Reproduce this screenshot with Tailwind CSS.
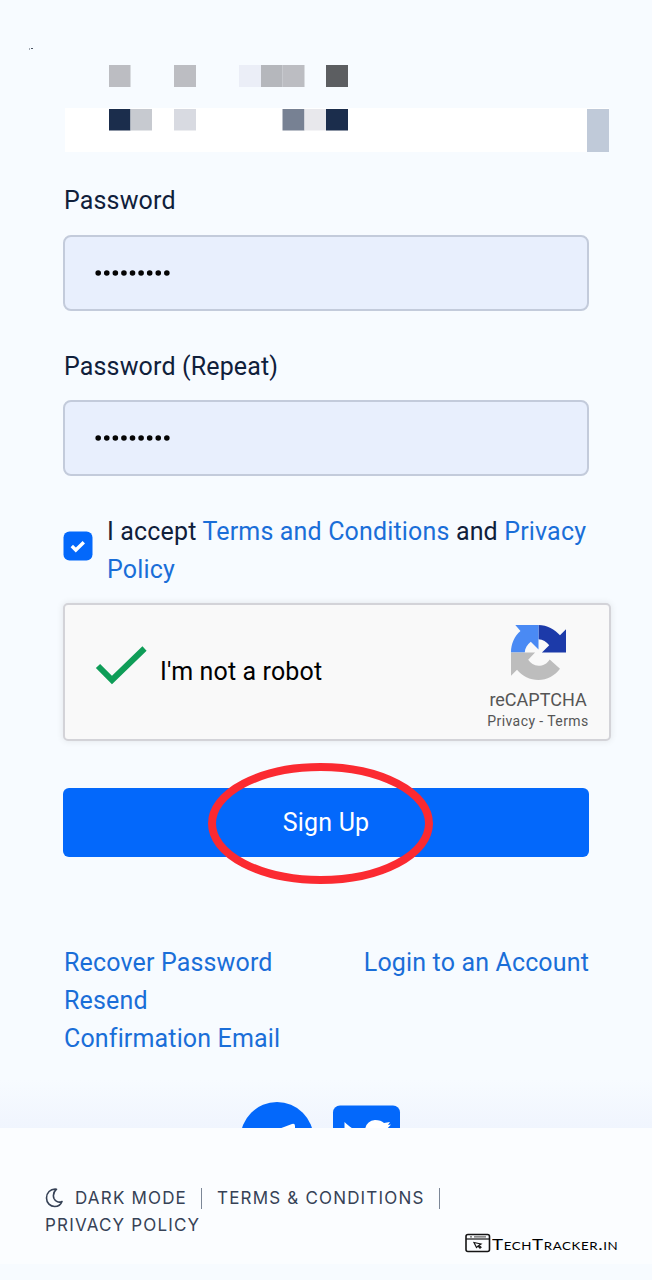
<!DOCTYPE html>
<html lang="en">
<head>
<meta charset="utf-8">
<title>Sign Up</title>
<script src="https://cdn.jsdelivr.net/npm/@tailwindcss/browser@4"></script>
</head>
<body class="h-[1280px] w-[652px] overflow-hidden bg-[#f7fbff] font-[Roboto,sans-serif] text-[25px] leading-[38px] text-[#10203b]">
<main class="relative h-[1128px] overflow-hidden">
  <div class="h-[65px] pt-[47px] pl-[29px]">
    <svg class="block h-1 w-1" viewBox="0 0 4 4"><path d="M0 2h1M2 1.5h2" stroke="#4b5563" stroke-width="1"/></svg>
  </div>
  <!-- Hidden e-mail label and field -->
  <svg class="ml-[65px] block h-[87px] w-[545px]" viewBox="0 0 545 87">
    <path fill="#fff" d="M0 43h544v44H0z"/>
    <path fill="#bcbdc2" d="M44 0h21.5v22H44zM109 0h22v22h-22zM217.500 0h22v22h-22z"/>
    <path fill="#ebeef7" d="M174 0h22v22h-22z"/>
    <path fill="#b5b7bc" d="M196 0h21.500v22H196z"/>
    <path fill="#5c5e61" d="M261 0h22v22h-22z"/>
    <path fill="#1b2d4c" d="M44 44h21.500v21.500H44zM261 44h22v21.500h-22z"/>
    <path fill="#c7cad0" d="M65.500 44H87v21.500H65.500z"/>
    <path fill="#d8dae1" d="M109 44h22v21.500h-22z"/>
    <path fill="#778193" d="M217.500 44h22v21.500h-22z"/>
    <path fill="#e8e8ec" d="M239.500 44H261v21.500h-21.500z"/>
    <path fill="#c0cad9" d="M522 44h22v43h-22z"/>
  </svg>
  <form class="px-[63px] pt-[30px]">
    <label class="block pl-px"><span class="tracking-[0.150px]">Password</span></label>
    <div class="mt-[15px] flex h-[76px] w-[526px] items-center rounded-[8px] border-2 border-[#c3cbdb] bg-[#e8effd] pl-[30px]">
      <svg class="h-[6px] w-[76px]" viewBox="0 0 76 6"><path d="M3.200 3h69" fill="none" stroke="#050505" stroke-width="5.600" stroke-linecap="round" stroke-dasharray="0 8.580"/></svg>
    </div>
    <label class="mt-[37px] block pl-px"><span class="tracking-[0.150px]">Password (Repeat)</span></label>
    <div class="mt-[14px] flex h-[76px] w-[526px] items-center rounded-[8px] border-2 border-[#c3cbdb] bg-[#e8effd] pl-[30px]">
      <svg class="h-[6px] w-[76px]" viewBox="0 0 76 6"><path d="M3.200 3h69" fill="none" stroke="#050505" stroke-width="5.600" stroke-linecap="round" stroke-dasharray="0 8.580"/></svg>
    </div>
    <div class="mt-[37px] flex h-[76px]">
      <svg class="mt-[18px] h-[30px] w-[30px] shrink-0" viewBox="0 0 30 30"><rect x=".5" y=".5" width="29" height="29" rx="6" fill="#0368fb"/><path d="M8.800 15l4 4 8-7.800" fill="none" stroke="#fff" stroke-width="3.400"/></svg>
      <p class="ml-[14px] whitespace-nowrap tracking-[0.160px]">I accept <a class="text-[#1a6ed8]">Terms and Conditions</a> and <a class="text-[#1a6ed8]">Privacy<br>Policy</a></p>
    </div>
    <div class="mt-[14px] flex h-[138px] w-[548px] rounded-[5px] border-2 border-[#d3d3d8] bg-[#f9f9f9] shadow-[0_0_6px_1px_#00000012]">
      <svg class="mt-[41px] ml-[30px] h-[42px] w-[54px] shrink-0" viewBox="0 0 54 42"><path d="M3 20l14 14L49.500 2.500" fill="none" stroke="#0f9d58" stroke-width="6"/></svg>
      <span class="mt-[48px] ml-[11px] tracking-[0.130px] text-black">I'm not a robot</span>
      <div class="ml-auto flex w-[142px] flex-col items-center pt-[20px] text-[#555]">
        <svg class="h-[55px] w-[55px] shrink-0" viewBox="0 0 64 64">
          <path fill="#1c3aa9" d="M32 0v16.500c5 .3 9.500 3 12.500 7L36 32h28V5l-7 7C51 5 42 0 32 0z"/>
          <path fill="#4a8af4" d="M32 0H5l6 7C4 13 0 22 0 32h16c.3-5 3-9.500 7-12.500l9 9z"/>
          <path fill="#bdbdbd" d="M0 32v27l7-7c6 7 15 12 25 12 10 0 19-5 25-13L45 40c-3 5-8 7.500-13 7.500-5-.3-9.500-3-12-7l8-8.500z"/>
        </svg>
        <span class="mt-[9px] text-[18px] leading-[22px]">reCAPTCHA</span>
        <span class="text-[14px] leading-[20px] tracking-[0.420px] whitespace-pre">Privacy - Terms</span>
      </div>
    </div>
    <div class="relative mt-[47px] flex h-[69px] w-[526px] items-center justify-center rounded-[6px] bg-[#0368fb] text-white">
      <span class="tracking-[0.200px]">Sign Up</span>
      <svg class="absolute -top-[27px] left-[143px] h-[124px] w-[230px]" viewBox="0 0 230 124"><ellipse cx="114.500" cy="62.500" rx="108.500" ry="56.500" fill="none" stroke="#fb2a31" stroke-width="8"/></svg>
    </div>
    <nav class="mt-[87px] flex w-[526px] justify-between pl-px tracking-[0.150px] text-[#1a6ed8]">
      <div><a>Recover Password</a><br><a>Resend<br>Confirmation Email</a></div>
      <a>Login to an Account</a>
    </nav>
  </form>
  <div class="absolute inset-x-0 bottom-0 h-[48px] bg-linear-to-b from-[#f0f5fe]/0 to-[#f0f5fe]"></div>
  <svg class="absolute bottom-0 left-[240px] h-[28px] w-[162px]" viewBox="0 0 162 28">
    <circle cx="37" cy="38.500" r="36.500" fill="#0368fb"/><path d="M40 28.500l12-4.500q3-1 3 2v2.500z" fill="#fff"/>
    <rect x="93" y="5.500" width="67" height="67" rx="7" fill="#0368fb"/>
    <path d="M104.500 22c4 4 8 7 12 8h-12zM125 30q1-9 10-10 6 0 9 3l6-1-2 3 3-.500-5 5.500z" fill="#fff"/>
  </svg>
</main>
<footer class="flex h-[136px] justify-between bg-[#fbfdff] pt-[56px] pr-[32px] pl-[45px] font-[Inter,sans-serif] text-[17px] leading-[28px] text-[#364256]">
  <div class="tracking-[1.180px] whitespace-nowrap">
    <div class="flex items-center">
      <svg class="h-[20px] w-[18px]" viewBox="0 0 18 20" fill="none" stroke="#364256" stroke-width="1.600" stroke-linejoin="round"><path d="M11.500 1.200C5 .5 1.500 5 1.500 10c0 5 3.800 8.500 8.200 8.500 3.500 0 6-1.500 7.300-5-3 1.300-6.500.5-8-3-1.200-3.200 0-7 2.500-9.300z"/></svg>
      <span class="ml-[12px]">DARK MODE</span>
      <span class="ml-[14px] h-[21px] w-px bg-[#7c8797]"></span>
      <span class="ml-[15px]">TERMS &amp; CONDITIONS</span>
      <span class="ml-[14px] h-[21px] w-px bg-[#7c8797]"></span>
    </div>
    <div class="-mt-px">PRIVACY POLICY</div>
  </div>
  <div class="flex items-start pt-[49px] text-black">
    <svg class="h-[20px] w-[26px] shrink-0" viewBox="0 0 26 20" fill="none" stroke="#151515"><rect x="1" y="1.500" width="23.500" height="17" rx="2" stroke-width="1.600"/><path d="M1 6h23.500" stroke-width="1.200"/><path d="M5 3.800h2m2 0h12" stroke="#666" stroke-width="1.300"/><path d="M9 9.500l7 1.500-2 1.300 2 2-1 .8-2-2-1.500 1.500z" stroke-width="1.200"/></svg>
    <span class="ml-px w-[128px] origin-left scale-x-[1.210] font-[Lato,sans-serif] text-[15.500px] leading-[23px] tracking-[0.500px] whitespace-nowrap [font-variant:small-caps]">TechTracker.in</span>
  </div>
</footer>
</body>
</html>
